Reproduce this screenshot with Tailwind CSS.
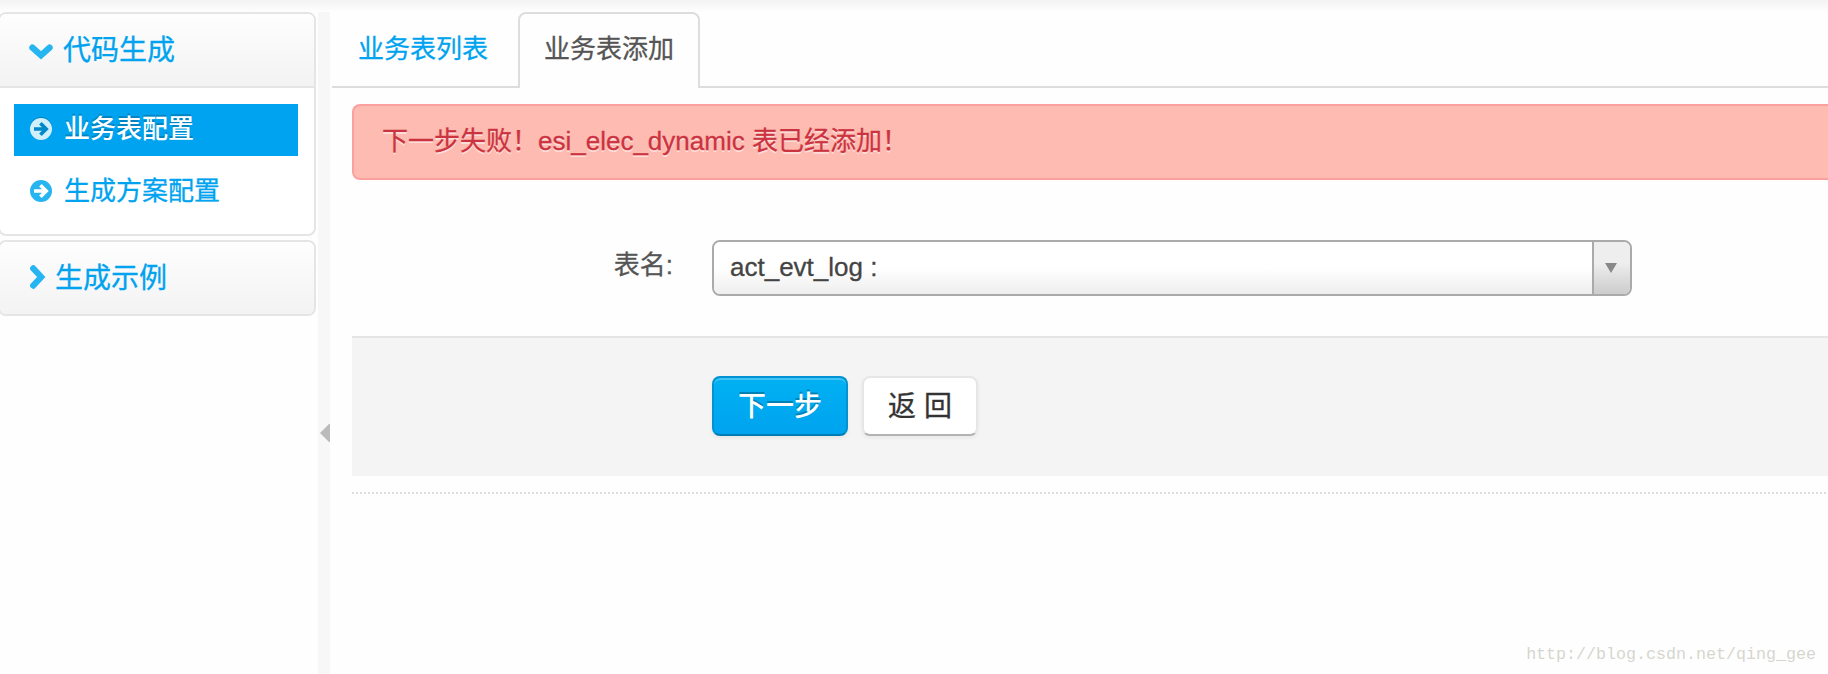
<!DOCTYPE html>
<html lang="zh-CN">
<head>
<meta charset="utf-8">
<title>业务表添加</title>
<script src="https://cdn.jsdelivr.net/npm/@tailwindcss/browser@4"></script>
</head>
<body class="relative flex h-[674px] w-[1828px] overflow-hidden bg-[#fefefe] pt-3 font-['Liberation_Sans','Noto_Sans_CJK_SC',sans-serif] text-[26px] leading-[40px] text-[#555555] [-webkit-text-stroke:0.3px]">
  <div class="absolute inset-x-0 top-0 h-3 bg-linear-to-b from-[#f3f3f3] to-[#fefefe]"></div>

  <aside class="-ml-0.5 flex w-[318px] shrink-0 flex-col gap-1 text-[#00a3ef]">
    <section class="h-[224px] overflow-hidden rounded-lg border-2 border-[#e5e5e5] bg-white">
      <h2 class="flex h-[74px] items-center border-b-2 border-[#e5e5e5] bg-linear-to-b from-[#fefefe] to-[#f3f3f3] pl-[29px] text-[28px]">
        <svg class="mt-[3px] mr-[10px] h-4 w-6" viewBox="0 0 24 16" fill="none" stroke="#27b5f2" stroke-width="6.2" stroke-linecap="round"><path d="M3.4 3.6 12 11.4 20.6 3.6"/></svg>
        <span class="mt-0.5">代码生成</span>
      </h2>
      <ul class="pt-4 pl-[14px]">
        <li class="flex h-[52px] w-[284px] items-center bg-[#00a3ef] pl-4 font-medium text-white [-webkit-text-stroke:0px] [text-shadow:0_-2px_0_rgba(0,0,0,0.2)]">
          <svg class="-mt-[3px] mr-3 h-[22px] w-[22px] drop-shadow-[0_-1px_0_rgba(0,0,0,0.2)]" viewBox="0 0 22 22"><circle cx="11" cy="11" r="11" fill="#d0effc"/><path d="M4 11H16M10.4 5.2 16.2 11l-5.8 5.8" fill="none" stroke="#0089c9" stroke-width="3.6"/></svg>
          <span class="-mt-0.5">业务表配置</span>
        </li>
        <li class="mt-2.5 flex h-[52px] w-[284px] items-center pl-4">
          <svg class="-mt-[3px] mr-3 h-[22px] w-[22px]" viewBox="0 0 22 22"><circle cx="11" cy="11" r="11" fill="#27b5f2"/><path d="M4 11H16M10.4 5.2 16.2 11l-5.8 5.8" fill="none" stroke="#fff" stroke-width="3.6"/></svg>
          <span class="-mt-0.5">生成方案配置</span>
        </li>
      </ul>
    </section>
    <section class="h-[76px] overflow-hidden rounded-lg border-2 border-[#e5e5e5]">
      <h2 class="flex h-[72px] items-center bg-linear-to-b from-[#fefefe] to-[#f3f3f3] pl-[30px] text-[28px]">
        <svg class="-mt-0.5 mr-[9px] h-6 w-4" viewBox="0 0 16 24" fill="none" stroke="#27b5f2" stroke-width="6.2" stroke-linecap="round"><path d="M3.2 3.4 11.2 12 3.2 20.6"/></svg>
        <span class="mt-0.5">生成示例</span>
      </h2>
    </section>
  </aside>

  <div class="ml-0.5 flex w-3 shrink-0 justify-end bg-[#f7f7f7] pt-[412px]">
    <svg class="h-[18px] w-2.5" viewBox="0 0 10 18"><path d="M10 0H9L0 9l9 9h1z" fill="#bbb"/></svg>
  </div>

  <main class="ml-0.5 flex min-w-0 flex-1 flex-col">
    <nav class="flex h-[76px] shrink-0">
      <a class="h-full w-[186px] border-b-2 border-[#dddddd] pt-[17px] pl-[26px] text-[#00a3ef]">业务表列表</a>
      <a class="h-full w-[182px] rounded-t-lg border-2 border-b-0 border-[#dddddd] bg-[#fefefe] pt-[15px] pl-6">业务表添加</a>
      <span class="h-full flex-1 border-b-2 border-[#dddddd]"></span>
    </nav>
    <div class="mt-4 ml-5 flex flex-col">
      <div class="h-[76px] rounded-l-lg border-2 border-r-0 border-[#fca09f] bg-[#fdbbb1] pt-[15px] pl-[28px] text-[#cc3340] [text-shadow:0_2px_0_rgba(255,255,255,0.5)]">下一步失败！esi_elec_dynamic 表已经添加！</div>

      <div class="mt-[60px] flex h-14">
        <label class="w-[321px] pt-[5px] text-right">表名:</label>
        <div class="ml-[39px] flex h-14 w-[920px] overflow-hidden rounded-lg border-2 border-[#aaaaaa] text-[#444444]">
          <span class="flex-1 bg-linear-to-t from-[#eeeeee] to-white to-50% pt-[5px] pl-4">act_evt_log :</span>
          <span class="flex w-[38px] border-l-2 border-[#aaaaaa] bg-linear-to-t from-[#cccccc] to-[#eeeeee] to-60% pt-[21px] pl-[11px]">
            <svg class="h-2.5 w-3" viewBox="0 0 12 10"><path d="M0 0h12L6 10z" fill="#888"/></svg>
          </span>
        </div>
      </div>

      <div class="mt-10 flex h-[140px] gap-3.5 border-t-2 border-[#e5e5e5] bg-[#f4f4f4] pt-[38px] pl-[360px] text-[28px]">
        <button class="h-[60px] w-[136px] rounded-lg border-2 border-[#0092d2] border-b-[#007cb5] bg-linear-to-b from-[#00b1f2] to-[#00a3ef] pt-0.5 font-medium text-white shadow-[inset_0_2px_0_rgba(255,255,255,0.25),0_2px_4px_rgba(0,0,0,0.06)] [-webkit-text-stroke:0px] [text-shadow:0_-2px_0_rgba(0,0,0,0.25)]">下一步</button>
        <button class="h-[60px] w-[116px] rounded-lg border-2 border-[#e6e6e6] border-b-[#b3b3b3] bg-white pt-0.5 text-[#333333] shadow-[0_2px_4px_rgba(0,0,0,0.05)]">返 回</button>
      </div>
      <div class="mt-4 h-0.5 bg-[repeating-linear-gradient(90deg,#dddddd_0_2px,transparent_2px_4px)]"></div>
    </div>
    <footer class="mt-auto mr-3 mb-[7px] text-right font-['Liberation_Mono',monospace] text-[16.67px] leading-[24px] text-[#d6d6d0] [-webkit-text-stroke:0px]">http://blog.csdn.net/qing_gee</footer>
  </main>
</body>
</html>
